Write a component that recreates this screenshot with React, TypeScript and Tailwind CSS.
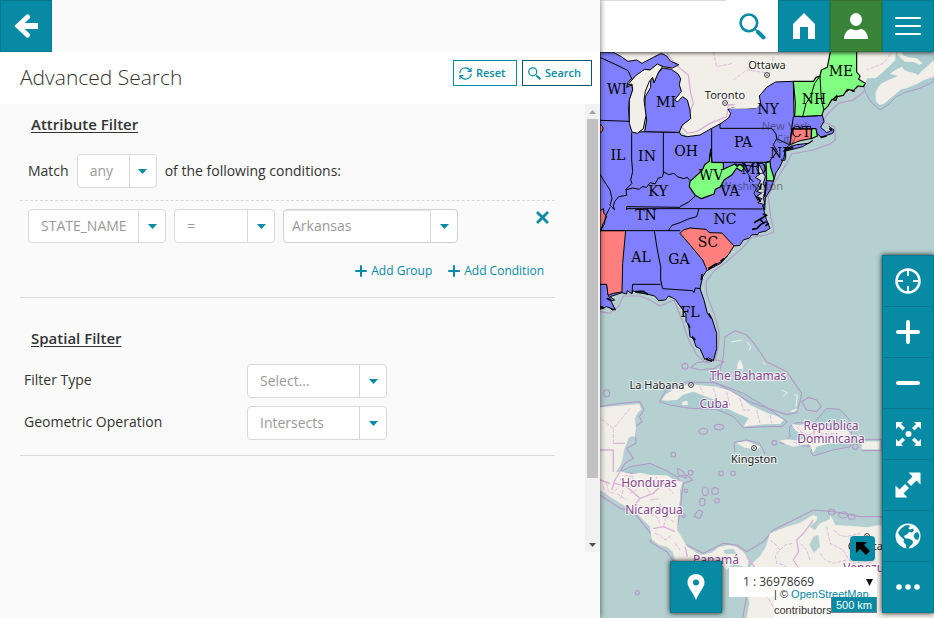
import type { ReactNode } from 'react';

const STATE_LABELS = [
  { t: 'WI', x: 17, y: 94 },
  { t: 'MI', x: 66, y: 107 },
  { t: 'IL', x: 18, y: 160 },
  { t: 'IN', x: 47, y: 161 },
  { t: 'OH', x: 86, y: 156 },
  { t: 'PA', x: 143, y: 147 },
  { t: 'NY', x: 168, y: 114 },
  { t: 'ME', x: 241, y: 76 },
  { t: 'NH', x: 214, y: 104 },
  { t: 'CT', x: 201, y: 137 },
  { t: 'NJ', x: 179, y: 158 },
  { t: 'MD', x: 154, y: 174 },
  { t: 'WV', x: 111, y: 180 },
  { t: 'VA', x: 130, y: 196 },
  { t: 'KY', x: 58, y: 196 },
  { t: 'TN', x: 46, y: 220 },
  { t: 'NC', x: 125, y: 224 },
  { t: 'SC', x: 108, y: 247 },
  { t: 'AL', x: 41, y: 262 },
  { t: 'GA', x: 79, y: 264 },
  { t: 'FL', x: 90, y: 317 },
];

const CITIES = [
  { t: 'Ottawa', x: 167, y: 69, cx: 167, cy: 75 },
  { t: 'Toronto', x: 125, y: 99, cx: 125, cy: 103 },
  { t: 'La Habana', x: 57, y: 389, cx: 91, cy: 385 },
  { t: 'Kingston', x: 154, y: 463, cx: 154, cy: 448 },
  { t: 'Caracas', x: 268, y: 550, cx: 267, cy: 536 },
];

const COUNTRIES = [
  { t: 'The Bahamas', x: 148, y: 380 },
  { t: 'Cuba', x: 114, y: 408 },
  { t: 'República', x: 231, y: 430 },
  { t: 'Dominicana', x: 231, y: 443 },
  { t: 'Honduras', x: 49, y: 487 },
  { t: 'Nicaragua', x: 54, y: 514 },
  { t: 'Panamá', x: 116, y: 564 },
  { t: 'Venezuela', x: 272, y: 572 },
];

function MapCanvas() {
  return (
    <svg
      className="absolute inset-0 h-full w-full bg-[#b5d0d0]"
      viewBox="0 0 334 618"
      preserveAspectRatio="xMinYMin slice"
      role="img"
      aria-label="Map"
    >
      {/* shapes are on a grid of three units to the pixel */}
      <g transform="translate(0 50) scale(0.33333)" strokeLinejoin="round">
        {/* shallow water */}
        <g fill="#abcdd0" stroke="#b196c8" strokeWidth="3">
          <path d="M795 125 L808 150 822 165 840 180 862 166 890 140 915 128 960 115 1002 95 1002 0 780 0 Z" />
          <path d="M178 1055 L200 1015 260 996 345 998 430 1030 500 1072 562 1115 548 1129 500 1130 430 1133 400 1100 350 1078 270 1075 210 1065 Z" />
          <path d="M404 1205 L402 1178 440 1170 478 1180 496 1212" fill="none" />
          <path d="M540 1178 L560 1170 570 1160 568 1130 590 1118 640 1120 680 1075 720 1078 750 1110 755 1160 752 1190 700 1200 640 1218 632 1205 640 1190 570 1185 Z" />
          <path d="M60 1267 L90 1250 150 1240 200 1262 230 1280 240 1295 L200 1280 Z" />
          <path d="M785 1168 L845 1168 845 1202 785 1202" />
        </g>
        {/* maritime boundaries */}
        <g fill="none" stroke="#b49bc9" strokeWidth="3.500">
          <path d="M795 120 L780 135 760 150 715 160 680 195 670 215 704 230 706 270 690 282 640 300 575 312 560 340 520 405 505 440 512 500 522 545 500 555 455 562 425 596 380 635 345 660 318 695 320 730 345 800 358 850 355 895 345 930 320 940 290 915 262 860 248 815 222 750 180 768 150 750 120 738 70 738 55 770 30 790 0 785" />
          <path d="M375 860 L405 842 440 855 462 880 500 935 560 965 605 1030 600 1055 590 1088 560 1094 450 1056 370 1010 330 990 360 960 370 920 Z" />
          <path d="M605 1055 L625 1042 650 1050 664 1070 650 1085 620 1080 Z" />
          <path d="M0 1070 L60 1060 120 1055 132 1080 118 1100 126 1115 105 1130 108 1180 80 1195 100 1225 75 1240 60 1265" />
          <path d="M230 1280 L260 1275 278 1290 250 1300 246 1330 240 1390 230 1440 250 1480 310 1510 370 1480 410 1485 440 1505 490 1475 520 1440 600 1400 640 1380 700 1385 780 1400 840 1400 1002 1420" />
          <path d="M0 1335 L60 1375 100 1385 160 1460 150 1475 200 1505 225 1540" />
          <path d="M436 1560 L432 1600 440 1640 428 1704" />
          <path d="M272 953 L290 938 350 930 372 935 345 955 300 960 Z" />
          <path d="M232 1255 L250 1265 260 1285 235 1275 Z" />
          <path d="M282 1400 L295 1380 308 1385 300 1405 Z" />
          <circle cx="255" cy="949" r="9" />
          <ellipse cx="20" cy="1030" rx="9" ry="11" />
          <ellipse cx="310" cy="1144" rx="13" ry="9" />
          <ellipse cx="357" cy="1131" rx="14" ry="8" />
          <circle cx="220" cy="1214" r="7" />
          <circle cx="272" cy="1268" r="7" />
          <circle cx="363" cy="1270" r="7" />
          <circle cx="399" cy="1270" r="7" />
          <ellipse cx="316" cy="1324" rx="9" ry="13" />
          <ellipse cx="345" cy="1323" rx="10" ry="10" />
          <ellipse cx="307" cy="1356" rx="8" ry="11" />
          <circle cx="351" cy="1352" r="7" />
          <circle cx="258" cy="1322" r="5" />
          <circle cx="251" cy="1397" r="5" />
          <circle cx="112" cy="1628" r="6" />
          <circle cx="523" cy="1178" r="7" />
          <circle cx="766" cy="1190" r="8" />
          <ellipse cx="695" cy="1386" rx="10" ry="8" />
          <ellipse cx="730" cy="1395" rx="14" ry="9" />
          <ellipse cx="755" cy="1400" rx="10" ry="8" />
        </g>

        {/* land */}
        <g fill="#f2efe9">
          <path d="M0 0 L888 0 886 30 868 48 845 70 826 85 802 85 795 100 600 200 540 240 300 280 0 100 Z" />
          <path d="M826 130 L834 112 845 100 870 88 895 78 870 72 886 60 905 50 914 60 925 65 940 68 955 75 966 62 975 55 1002 30 1002 80 972 90 950 102 920 115 904 118 890 130 870 146 850 163 838 164 828 154 Z" />
          <path d="M900 0 L910 16 925 22 950 25 968 40 958 44 940 36 915 35 900 22 890 12 Z" />
          <path d="M0 1072 L50 1068 118 1062 124 1078 112 1090 104 1108 108 1130 106 1160 96 1158 85 1165 80 1180 72 1200 68 1225 62 1245 46 1268 60 1264 95 1272 120 1268 150 1274 200 1276 222 1288 248 1296 240 1320 240 1350 234 1390 232 1440 244 1460 262 1490 300 1515 335 1508 356 1492 385 1486 408 1490 430 1505 446 1530 440 1570 428 1550 400 1540 380 1560 360 1540 330 1530 300 1550 225 1530 218 1505 200 1490 176 1484 155 1468 150 1430 124 1404 105 1382 60 1360 0 1320 Z" />
          <path d="M440 1704 L448 1660 436 1600 445 1560 458 1540 480 1518 498 1490 510 1450 560 1430 600 1418 640 1395 652 1400 650 1412 628 1430 645 1440 660 1420 690 1408 690 1395 698 1408 705 1425 760 1428 800 1432 840 1425 880 1445 1002 1450 1002 1704 Z" />
          <path d="M185 1050 L196 1034 210 1025 236 1008 270 1003 350 1010 390 1022 420 1040 450 1065 500 1088 530 1098 552 1110 540 1122 480 1124 430 1130 446 1104 420 1094 390 1080 350 1052 320 1040 280 1025 250 1034 230 1050 200 1052 Z" />
          <path d="M245 1056 L262 1052 264 1064 248 1066 Z" />
          <path d="M408 1178 L440 1174 482 1190 470 1200 430 1192 Z" />
          <path d="M538 1172 L560 1168 600 1172 612 1160 585 1140 575 1122 600 1126 630 1118 680 1128 740 1140 760 1160 740 1176 690 1180 650 1190 640 1208 628 1182 580 1190 560 1184 Z" />
          <rect x="785" y="1174" width="54" height="24" />
          <path d="M412 944 L420 928 428 945 430 958 412 958 Z" />
          <path d="M570 1084 L588 1076 594 1078 580 1086 Z" />
        </g>
        <g fill="none" stroke="#eef3ee" strokeWidth="3">
          <path d="M394 876 L410 873 425 870 M442 876 L452 890 448 902 M488 935 L496 945 M508 975 L522 992 M545 1020 L562 1028 550 1038 M582 1034 L592 1036 588 1070" />
        </g>

        {/* lakes in Venezuela and Nicaragua */}
        <path d="M640 1460 L655 1455 660 1490 642 1508 628 1485 Z" fill="#b5d0d0" />
        <path d="M370 1500 L400 1496 412 1512 375 1512 Z" fill="#b5d0d0" />

        {/* country and province lines */}
        <g fill="none" stroke="#d9b0d7" strokeWidth="4">
          <path d="M200 10 L240 55 265 75 272 130 280 160 262 205 245 232 262 250 290 245 330 220 380 200 385 165 480 160 485 140" />
          <path d="M0 1200 L40 1200 40 1265 M40 1180 L75 1180 M60 1265 L45 1290 35 1320 M45 1300 L80 1310 120 1345 160 1330 190 1300 240 1290 M0 1290 L30 1300 M120 1345 L100 1370 M160 1436 L190 1430 225 1445 M255 1490 L262 1520 M440 1520 L470 1560 M640 1410 L610 1450 590 1470 596 1505 580 1530 600 1560 640 1590 690 1600 M640 1130 L645 1180" />
        </g>
        <g fill="none" stroke="#deb9de" strokeWidth="3" strokeDasharray="12 4">
          <path d="M40 1180 L40 1135 90 1075 M40 1135 L0 1105 M60 1290 L78 1276 100 1280 98 1296 110 1310 132 1304 150 1290 140 1310 150 1330 M170 1280 L164 1300 180 1320 M200 1300 L206 1316 220 1330 M70 1320 L60 1350 M20 1300 L25 1325 40 1330 55 1310 M90 1330 L110 1320 M10 1310 L16 1330 30 1344 M50 1330 L80 1350 M180 1360 L186 1384 200 1400 190 1430 M130 1370 L146 1392 170 1400 180 1420 M150 1350 L176 1346 M210 1380 L235 1400 M200 1400 L222 1416 M165 1450 L180 1456 195 1470 215 1455 M225 1480 L240 1500" />
          <path d="M300 1010 L310 1030 M340 1015 L350 1045 M380 1025 L390 1070 M420 1045 L430 1080 450 1080 M470 1080 L480 1120 M510 1095 L515 1120 M590 1130 L620 1160 650 1140 680 1180 M600 1145 L640 1160 700 1150 720 1175 M660 1130 L670 1170 M580 1176 L600 1184 M690 1132 L700 1170" />
          <path d="M510 1470 L524 1480 540 1500 526 1516 530 1540 550 1544 570 1560 M540 1500 L556 1484 580 1480 M480 1560 L496 1570 520 1590 500 1640 514 1660 530 1690 M680 1430 L690 1480 730 1500 M700 1440 L720 1456 740 1460 780 1450 M730 1500 L744 1526 760 1540 800 1534 840 1550 M660 1510 L676 1530 700 1540 740 1530 M560 1640 L600 1650 620 1690 M600 1480 L620 1500 630 1530" />
          <path d="M100 110 L105 190 108 240 M90 110 L110 80 140 80 M340 6 L350 50 400 40 M400 90 L440 60 510 70 520 20 M880 0 L850 40 800 60" />
        </g>

        {/* blue states */}
        <g fill="#7f7fff" stroke="#000" strokeWidth="3">
          <path d="M0 18 L22 32 38 36 52 46 78 52 84 62 92 66 96 84 84 98 80 112 96 104 98 120 88 150 86 180 88 212 94 235 104 247 135 245 238 247 244 256 262 260 300 255 333 236 360 222 386 204 392 190 384 178 400 173 440 176 466 174 482 160 478 138 500 112 526 96 580 94 582 200 667 196 672 214 662 232 680 248 690 244 694 236 688 230 702 240 698 250 680 256 664 262 650 250 640 262 590 274 570 284 556 296 552 322 540 350 528 368 522 388 520 395 512 418 496 444 494 480 488 465 498 505 506 525 510 535 498 543 476 548 474 554 456 554 448 564 430 570 420 586 400 588 380 620 362 640 320 662 308 680 300 716 312 750 322 790 336 806 350 850 350 896 340 932 326 924 314 928 300 896 288 890 280 866 270 860 266 824 258 814 258 792 240 768 226 748 206 738 196 750 176 752 164 738 140 732 112 728 98 722 96 732 82 722 80 732 66 728 30 740 44 750 26 754 46 778 36 780 20 764 0 770 Z" />
          <path d="M38 6 L64 20 84 34 110 30 126 40 160 22 184 10 200 18 212 34 236 44 218 54 190 50 170 44 152 60 134 58 118 78 112 92 98 92 84 62 52 46 0 22 0 6 Z" />
          <path d="M188 54 L214 58 234 72 242 86 238 104 244 124 224 150 232 156 248 140 262 150 270 180 272 206 246 226 238 247 134 245 140 210 134 174 136 140 152 112 152 92 164 82 162 98 172 72 Z" />
          <path d="M560 294 L590 284 626 280 638 272 608 290 570 300 550 304 Z" />
          <path d="M0 703 L20 703 26 738 46 780 20 770 0 778 Z" />
        </g>

        {/* great lakes and bays */}
        <g fill="#f2efe9" stroke="#000" strokeWidth="3">
          <path d="M88 150 L98 120 96 102 82 106 108 76 134 58 150 60 172 42 188 50 176 66 162 98 158 82 148 94 136 124 132 150 138 196 130 236 112 250 96 246 88 220 Z" />
          <path d="M380 176 L404 172 404 160 470 158 482 160 470 174 440 176 Z" stroke="none" />
        </g>
        <g fill="#cfdce0" stroke="#000" strokeWidth="3">
          <path d="M478 344 L470 356 480 372 466 382 482 392 474 408 484 414 470 424 484 430 468 440 486 446 474 458 494 464 490 440 498 420 490 400 496 380 Z" />
          <path d="M456 402 L470 414 462 430 474 452 M446 380 L460 396" fill="none" />
          <path d="M488 492 L500 496 480 508 462 518 M500 515 L484 522 470 536 456 538 M480 508 L490 518" fill="none" strokeWidth="5" />
        </g>

        {/* green states */}
        <g fill="#80ff80" stroke="#000" strokeWidth="3.500">
          <path d="M580 94 L640 94 648 82 660 78 664 60 682 52 692 0 770 0 770 66 780 78 776 88 796 100 790 110 774 108 760 122 742 118 730 136 712 140 708 152 696 148 684 168 670 182 666 196 608 200 584 198 586 160 Z" />
          <path d="M332 298 L336 337 370 338 370 358 404 342 412 350 420 342 432 354 424 364 410 354 396 374 372 390 362 410 346 418 342 432 304 446 286 436 268 410 270 394 290 376 306 362 314 344 328 334 Z" />
          <path d="M635 236 L648 236 652 258 634 266 Z" />
          <path d="M498 337 L510 334 512 352 522 384 520 393 500 392 Z" />
        </g>
        {/* red states */}
        <g fill="#ff7f7f" stroke="#000" strokeWidth="3">
          <path d="M575 237 L634 237 633 266 600 272 570 284 Z" />
          <path d="M0 542 L77 542 68 640 66 726 40 730 24 736 20 703 0 703 Z" />
          <path d="M240 550 L250 540 270 534 318 538 328 548 366 549 402 588 384 616 362 636 340 648 322 662 308 630 266 580 Z" />
          <path d="M0 482 L10 476 12 490 20 500 10 520 0 545 Z" />
          <path d="M0 225 C12 225 12 247 0 247 Z" />
        </g>

        {/* state borders */}
        <g fill="none" stroke="#000" strokeWidth="3">
          <path d="M0 211 L88 214 M95 248 L95 330 98 365 92 390 96 400 78 418 80 436 56 440 44 455 40 468 44 480" />
          <path d="M190 247 L190 370 M335 236 L335 337 505 337 M333 298 L328 325" />
          <path d="M78 420 L98 414 118 418 126 410 140 412 150 398 165 402 175 384 186 382 192 366 206 374 222 370 232 380 252 386 262 382 270 392" />
          <path d="M360 222 L360 235 515 235 528 252 530 266 520 284 532 304 506 337" />
          <path d="M530 266 L568 284 M575 237 L570 284 M580 200 L575 237 640 236 M608 200 L618 160 632 140 644 100 660 78 664 150 672 180" />
          <path d="M80 480 L80 470 240 472 M80 476 L298 476 488 477 M0 372 L10 390 30 420 36 446 30 465 44 480 M240 470 L266 456 286 438" />
          <path d="M0 542 L240 542 M297 476 L290 500 262 508 240 518 216 526 205 542 M30 472 L16 500 14 520 0 545" />
          <path d="M163 542 L172 600 182 650 182 690 188 716 278 722 282 728 286 714 302 716 M96 728 L98 703 182 703" />
          <path d="M404 342 L470 350 474 337 M432 354 L450 380 448 396" />
        </g>
        {/* ragged coastline */}
        <g fill="none" stroke="#000" strokeWidth="5">
          <path d="M700 148 L712 136 M738 126 L746 118 M756 122 L764 124 M688 235 L696 242 M662 262 L680 258 M325 656 L350 640 M306 672 L304 690 M326 790 L334 805 M105 725 L130 724 145 734 M264 822 L270 834 M276 860 L286 870 M318 928 L336 934 M0 770 L14 774 M20 745 L34 752 M555 300 L580 292 M499 395 L494 440" />
          <path d="M484 400 L480 418 M472 440 L482 456 M496 528 L506 520 M372 625 L362 634" />
        </g>
      </g>

      {/* place names */}
      <g fontFamily="'Noto Sans', sans-serif" fontSize="11" textAnchor="middle">
        <g fill="#222" fillOpacity="0.5">
          <text x="186" y="130">New York</text>
          <text x="186" y="143">City</text>
          <text x="152" y="190">Washington</text>
        </g>
        {CITIES.map((c) => (
          <g key={c.t}>
            <circle cx={c.cx} cy={c.cy} r="2.4" fill="#fff" stroke="#333" strokeWidth="1" />
            <circle cx={c.cx} cy={c.cy} r="0.8" fill="#333" />
            <text x={c.x} y={c.y} fill="#222" stroke="#fff" strokeOpacity="0.7" strokeWidth="2" paintOrder="stroke">
              {c.t}
            </text>
          </g>
        ))}
        {COUNTRIES.map((c) => (
          <text key={c.t} x={c.x} y={c.y} fill="#87458c" stroke="#fff" strokeOpacity="0.75" strokeWidth="2" paintOrder="stroke" fontSize="12">
            {c.t}
          </text>
        ))}
      </g>
      <g fontFamily="'DejaVu Serif', serif" fontSize="14" textAnchor="middle" fill="#000">
        {STATE_LABELS.map((s) => (
          <text key={s.t} x={s.x} y={s.y}>{s.t}</text>
        ))}
      </g>
    </svg>
  );
}

function Dropdown({ id, label, options, className }: { id: string; label: string; options: string[]; className: string }) {
  return (
    <div className={`flex h-[34px] overflow-hidden rounded border border-[#d9d9d9] bg-white ${className}`}>
      <select
        id={id}
        aria-label={label}
        className="min-w-0 flex-1 appearance-none bg-transparent pl-3 text-sm text-[#999] outline-none"
      >
        {options.map((o) => (
          <option key={o}>{o}</option>
        ))}
      </select>
      <span className="pointer-events-none flex w-[27px] shrink-0 items-center justify-center border-l border-[#d9d9d9]">
        <svg width="9" height="5" viewBox="0 0 9 5" fill="#078aa3"><path d="M0 0h9L4.500 5z" /></svg>
      </span>
    </div>
  );
}

function ToolButton({ label, children, className = 'bg-[#078aa3] border-[#06778d]' }: { label: string; children: ReactNode; className?: string }) {
  return (
    <button aria-label={label} className={`flex size-[52px] shrink-0 items-center justify-center border text-white ${className}`}>
      {children}
    </button>
  );
}

function Plus({ size, thick = 2 }: { size: number; thick?: number }) {
  return (
    <svg width={size} height={size} viewBox="0 0 12 12" stroke="currentColor" strokeWidth={thick} strokeLinecap="round">
      <path d="M6 1v10M1 6h10" />
    </svg>
  );
}

function SearchIcon({ size }: { size: number }) {
  return (
    <svg width={size} height={size} viewBox="0 0 26 26" fill="none" stroke="#078aa3">
      <circle cx="9.500" cy="9.500" r="8" strokeWidth="2.500" />
      <path d="M15 15l3 3" strokeWidth="1.500" />
      <path d="M18.500 18.500l5 5" strokeWidth="4" strokeLinecap="round" />
    </svg>
  );
}

function QueryPanel() {
  return (
    <aside className="z-10 flex w-[600px] shrink-0 flex-col bg-[#fafafa] shadow-[0_0_6px_rgba(0,0,0,0.6)]">
      <div>
        <ToolButton label="Back">
          <svg width="24" height="24" viewBox="0 0 24 24" fill="none" stroke="currentColor">
            <path d="M3 12h21" strokeWidth="6" />
            <path d="M13.500 3L4 12l9.500 9" strokeWidth="5" strokeLinecap="round" />
          </svg>
        </ToolButton>
      </div>

      <header className="flex h-[52px] items-start justify-between bg-white pr-2 pl-5">
        <h1 className="pt-[11px] text-[21px] leading-7 font-light">Advanced Search</h1>
        <div className="flex gap-[5px] pt-2 text-[11px] font-semibold text-[#078aa3]">
          <button className="flex h-[26px] w-16 items-center gap-1 border border-[#078aa3] pl-[5px]">
            <svg width="13" height="13" viewBox="0 0 13 13" fill="none" stroke="currentColor" strokeWidth="1.200">
              <path d="M.8 6.200A5.600 5.600 0 0 1 11.400 4M12.200 6.800A5.600 5.600 0 0 1 1.600 9" />
              <path d="M12 .8v3.500H8.500M1 12.200V8.700h3.500" />
            </svg>
            Reset
          </button>
          <button className="flex h-[26px] w-[70px] items-center gap-1 border border-[#03596a] pl-[5px]">
            <SearchIcon size={13} />
            Search
          </button>
        </div>
      </header>

      <div className="mb-[66px] flex flex-1">
        <div className="min-w-0 flex-1 pr-[30px] pl-5 text-sm">
          <section className="border-b border-[#d9d9d9] pb-4">
            <h2 className="ml-[11px] pt-2 text-[15px] leading-6 font-semibold underline underline-offset-2">Attribute Filter</h2>
            <div className="mt-[18px] flex items-center gap-2 pl-2">
              <label htmlFor="match">Match</label>
              <Dropdown id="match" label="Match" options={['any', 'all', 'none']} className="w-20" />
              <span>of the following conditions:</span>
            </div>
            <div className="mt-3 flex gap-2 border-t border-dashed border-[#d9d9d9] pt-2 pl-2">
              <Dropdown id="attribute" label="Attribute" options={['STATE_NAME']} className="w-[138px]" />
              <Dropdown id="operator" label="Operator" options={['=', '<', '>']} className="w-[101px]" />
              <div className="flex h-[34px] w-[175px] overflow-hidden rounded border border-[#d0d0d0] bg-white">
                <input
                  aria-label="Value"
                  defaultValue="Arkansas"
                  className="min-w-0 flex-1 pl-2 text-sm text-[#999] shadow-[inset_0_1px_1px_rgba(0,0,0,0.1)] outline-none"
                />
                <button aria-label="Show values" className="flex w-[27px] items-center justify-center border-l border-[#d9d9d9]">
                  <svg width="9" height="5" viewBox="0 0 9 5" fill="#078aa3"><path d="M0 0h9L4.500 5z" /></svg>
                </button>
              </div>
              <button aria-label="Remove condition" className="mr-1.5 ml-auto h-4 text-[#078aa3]">
                <svg width="13" height="13" viewBox="0 0 13 13" stroke="currentColor" strokeWidth="2.800">
                  <path d="M1 1l11 11M12 1L1 12" />
                </svg>
              </button>
            </div>
            <div className="mt-[18px] flex justify-end gap-4 pr-[11px] text-xs leading-5 text-[#078aa3]">
              <button className="flex items-center gap-1"><Plus size={12} />Add Group</button>
              <button className="flex items-center gap-1"><Plus size={12} />Add Condition</button>
            </div>
          </section>

          <section className="border-b border-[#d9d9d9] pb-[15px]">
            <h2 className="ml-[11px] pt-7 text-[15px] leading-6 font-semibold underline underline-offset-2">Spatial Filter</h2>
            <div className="mt-3.5 grid grid-cols-[223px_140px] gap-y-2 pl-1">
              <label htmlFor="filter-type" className="leading-8">Filter Type</label>
              <Dropdown id="filter-type" label="Filter Type" options={['Select...']} className="w-full" />
              <label htmlFor="operation" className="leading-8">Geometric Operation</label>
              <Dropdown id="operation" label="Geometric Operation" options={['Intersects']} className="w-full" />
            </div>
          </section>
        </div>

        {/* scrollbar */}
        <div className="flex w-[15px] flex-col bg-[#f1f1f1]">
          <div className="flex h-[15px] items-center justify-center">
            <svg width="7" height="4" viewBox="0 0 7 4" fill="#a3a3a3"><path d="M0 4h7L3.500 0z" /></svg>
          </div>
          <div className="flex-1 px-0.5">
            <div className="h-[86%] bg-[#c1c1c1]" />
          </div>
          <div className="flex h-[15px] items-center justify-center">
            <svg width="7" height="4" viewBox="0 0 7 4" fill="#505050"><path d="M0 0h7L3.500 4z" /></svg>
          </div>
        </div>
      </div>
    </aside>
  );
}

function MapHeader() {
  return (
    <header className="relative flex shadow-[0_1px_4px_rgba(0,0,0,0.7)]">
      <input aria-label="Search location" className="min-w-0 flex-1 border-t border-[#ddd] bg-white outline-none" />
      <ToolButton label="Search" className="border-white bg-white">
        <SearchIcon size={27} />
      </ToolButton>
      <ToolButton label="Home">
        <svg width="24" height="27" viewBox="0 0 24 27" fill="currentColor"><path d="M12 0L23 11v15h-7V14H8v12H1V11z" /></svg>
      </ToolButton>
      <ToolButton label="User" className="border-[#327332] bg-[#398439]">
        <svg width="26" height="28" viewBox="0 0 26 28" fill="currentColor">
          <ellipse cx="13" cy="7.500" rx="6" ry="6.500" />
          <path d="M1 27c0-6 4-10 7-10 3 1.500 7 1.500 10 0 3 0 7 4 7 10z" />
        </svg>
      </ToolButton>
      <ToolButton label="Menu">
        <svg width="26" height="20" viewBox="0 0 26 20" stroke="currentColor" strokeWidth="2" strokeLinecap="round">
          <path d="M1 2h24M1 10h24M1 18h24" />
        </svg>
      </ToolButton>
    </header>
  );
}

function Toolbar() {
  return (
    <nav className="mb-[5px] flex flex-col -space-y-px shadow-[0_0_5px_rgba(0,0,0,0.9)]">
      <ToolButton label="Locate">
        <svg width="26" height="26" viewBox="0 0 26 26" fill="none" stroke="currentColor" strokeWidth="2">
          <circle cx="13" cy="13" r="11.500" strokeWidth="2.500" />
          <path d="M13 2v6M13 18v6M2 13h6M18 13h6" />
        </svg>
      </ToolButton>
      <ToolButton label="Zoom in"><Plus size={24} /></ToolButton>
      <ToolButton label="Zoom out">
        <svg width="24" height="5" viewBox="0 0 24 5" fill="currentColor"><rect width="24" height="4" rx="2" /></svg>
      </ToolButton>
      <ToolButton label="Zoom to extent">
        <svg width="25" height="24" viewBox="0 0 25 24" fill="currentColor">
          <circle cx="12.500" cy="12" r="3" />
          <path d="M0 0h7L5 2l4 4-2.500 2.500-4-4L0 7zM25 0v7l-2.500-2.500-4 4L16 6l4-4-2-2zM25 24h-7l2-2-4-4 2.500-2.500 4 4L25 17zM0 24v-7l2.500 2.500 4-4L9 18l-4 4 2 2z" />
        </svg>
      </ToolButton>
      <ToolButton label="Full screen">
        <svg width="26" height="26" viewBox="0 0 26 26" fill="currentColor">
          <path d="M13.500 .5H25.500V12.500l-4-4-5.500 5.500-4-4L17.500 4.500zM12.500 25.500H.5V13.500l4 4L10 12l4 4L8.500 21.500z" />
        </svg>
      </ToolButton>
      <ToolButton label="Globe">
        <svg width="26" height="26" viewBox="0 0 26 26" fill="currentColor">
          <circle cx="13" cy="13" r="12.500" />
          <path fill="#078aa3" d="M10 2.500l4-.5 1 2-2 1 2 1.500 3-1 1 2-2 2-3-.5-2 2.500-2 .5-1 2 2 1.500 3 0 4 2.500-.5 3-3 2.500-1 3-2-.5-.5-4-2.500-3 .5-2.500L5 13l-2-3.500L5.500 6z" />
          <path fill="#078aa3" d="M20 10l3-1 1.500 4-1.500 4-3-1-1.500-3z" />
        </svg>
      </ToolButton>
      <ToolButton label="More">
        <svg width="24" height="6" viewBox="0 0 24 6" fill="currentColor">
          <circle cx="3" cy="3" r="2.800" />
          <circle cx="12" cy="3" r="2.800" />
          <circle cx="21" cy="3" r="2.800" />
        </svg>
      </ToolButton>
    </nav>
  );
}

export default function App() {
  return (
    <div className="flex min-h-screen overflow-hidden font-['Open_Sans',sans-serif] text-[#333]">
      <QueryPanel />

      <main className="relative flex min-w-0 flex-1 flex-col">
        <MapCanvas />
        <MapHeader />

        <div className="relative flex flex-1 items-end justify-end">
          <div className="mr-[7px] mb-[5px] shadow-[0_0_5px_rgba(0,0,0,0.9)]">
            <ToolButton label="Identify">
              <svg width="18" height="26" viewBox="0 0 18 26" fill="currentColor" fillRule="evenodd">
                <path d="M9 0c5 0 8.500 3.500 8.500 8.500C17.500 13 13 17 9 26 5 17 .5 13 .5 8.500.5 3.500 4 0 9 0zm0 5.500a3 3 0 1 0 0 6 3 3 0 0 0 0-6z" />
              </svg>
            </ToolButton>
          </div>

          <div className="relative mr-[5px] flex w-[148px] flex-col">
            <button aria-label="Show overview" className="mr-0.5 mb-1.5 flex size-[25px] items-center justify-center self-end rounded bg-[#078aa3] text-black shadow">
              <svg width="14" height="14" viewBox="0 0 14 14" fill="currentColor">
                <path d="M0 0h11L8 3l6 6-4 4-6-6-4 4z" />
              </svg>
            </button>
            <div className="flex h-[30px] items-center bg-white pr-1 pl-3.5">
              <select aria-label="Scale" className="min-w-0 flex-1 appearance-none bg-transparent text-xs outline-none">
                <option>1 : 36978669</option>
              </select>
              <svg className="pointer-events-none" width="7" height="7" viewBox="0 0 7 7" fill="#111"><path d="M0 0h7L3.500 7z" /></svg>
            </div>
            <p className="-mt-[11px] ml-[45px] bg-white/70 font-['Liberation_Sans',sans-serif] text-[11px] leading-4">
              | © <a href="#" className="text-[#078aa3]">OpenStreetMap</a> contributors
            </p>
            <div className="absolute right-0 bottom-[5px] h-4 border border-t-0 border-[#6c8088] bg-[#078aa3] px-1 font-['Liberation_Sans',sans-serif] text-[11px] leading-4 text-white">
              500 km
            </div>
          </div>

          <Toolbar />
        </div>
      </main>
    </div>
  );
}
